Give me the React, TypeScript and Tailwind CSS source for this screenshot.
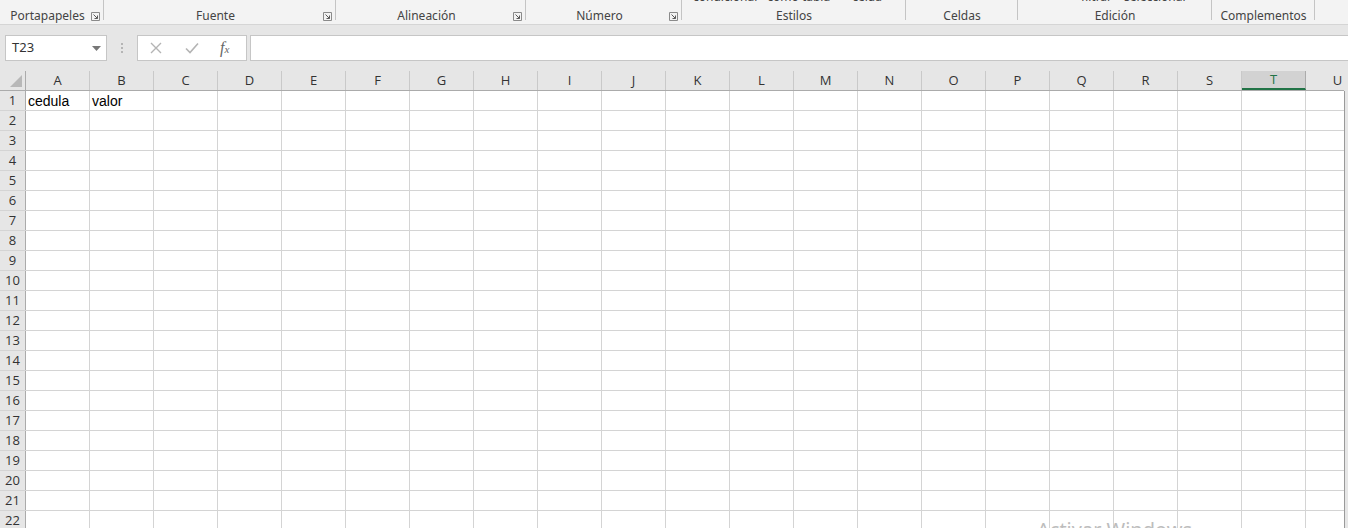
import React from 'react';

const columns = ['A', 'B', 'C', 'D', 'E', 'F', 'G', 'H', 'I', 'J', 'K', 'L', 'M', 'N', 'O', 'P', 'Q', 'R', 'S', 'T', 'U'];
const rows = Array.from({ length: 22 }, (_, i) => i + 1);

const cells: Record<string, string> = { A1: 'cedula', B1: 'valor' };

const groups = [
  { label: 'Portapapeles', width: 'w-[104px]', launcher: true },
  { label: 'Fuente', width: 'w-[232px]', launcher: true },
  { label: 'Alineación', width: 'w-[190px]', launcher: true },
  { label: 'Número', width: 'w-[156px]', launcher: true },
  { label: 'Estilos', width: 'w-[224px]', launcher: false },
  { label: 'Celdas', width: 'w-[112px]', launcher: false },
  { label: 'Edición', width: 'w-[194px]', launcher: false },
  { label: 'Complementos', width: 'w-[103px]', launcher: false },
];

function Launcher() {
  return (
    <svg width="9" height="9" viewBox="0 0 9 9" className="shrink-0">
      <path d="M0.5 0.5h8v8h-8z" fill="none" stroke="#8a8a8a" />
      <path d="M2.5 2.5l4 4M6.5 3.5v3h-3" fill="none" stroke="#5a5a5a" />
    </svg>
  );
}

function Ribbon() {
  return (
    <div className="relative flex h-[25px] border-b border-[#d5d5d5] bg-[#f3f3f3] overflow-hidden text-[12px] text-[#444]">
      {/* button captions cut off at the top of the ribbon */}
      <div className="absolute left-[693px] top-[-11px] flex gap-[8px] leading-[16px]">
        <span>condicional</span>
        <span className="ml-[2px]">como tabla</span>
        <span className="ml-[14px]">celda</span>
      </div>
      <div className="absolute left-[1081px] top-[-11px] flex gap-[12px] leading-[16px]">
        <span>filtrar</span>
        <span>seleccionar</span>
      </div>
      {groups.map((g) => (
        <div key={g.label} className={`${g.width} shrink-0 flex`}>
          <div className="flex-1 flex items-center h-[16px] mt-[8px] pl-[4px] pr-[3px] leading-[16px]">
            <span className="flex-1 text-center">{g.label}</span>
            {g.launcher && <Launcher />}
          </div>
          <div className="w-px h-[20px] bg-[#c4c4c4]" />
        </div>
      ))}
    </div>
  );
}

function FormulaBar() {
  return (
    <div className="flex items-center h-[46px] bg-[#e6e6e6] pl-[5px] text-[#333]">
      <div className="flex items-center w-[102px] h-[26px] bg-white border border-[#c6c6c6] pl-[6px] pr-[5px] text-[13px]">
        <span className="flex-1">T23</span>
        <svg width="9" height="5" viewBox="0 0 9 5">
          <path d="M0 0h9L4.5 5z" fill="#777" />
        </svg>
      </div>
      <div className="w-[30px] flex flex-col items-center gap-[2px]">
        <span className="w-[2px] h-[2px] bg-[#b5b5b5]" />
        <span className="w-[2px] h-[2px] bg-[#b5b5b5]" />
        <span className="w-[2px] h-[2px] bg-[#b5b5b5]" />
      </div>
      <div className="flex items-center w-[110px] h-[26px] bg-white border border-[#c6c6c6]">
        <svg width="12" height="12" viewBox="0 0 12 12" className="ml-[12px]">
          <path d="M1 1l10 10M11 1L1 11" stroke="#b4b4b4" strokeWidth="1.4" />
        </svg>
        <svg width="14" height="12" viewBox="0 0 14 12" className="ml-[23px]">
          <path d="M1 6.5l4 4L13 1.5" fill="none" stroke="#b4b4b4" strokeWidth="1.6" />
        </svg>
        <span className="ml-[21px] italic font-['Liberation_Serif',serif] text-[16px] text-[#666] leading-none">
          f<span className="text-[11px]">x</span>
        </span>
      </div>
      <div className="ml-[3px] flex-1 h-[26px] bg-white border border-[#c6c6c6] border-r-0" />
    </div>
  );
}

function Sheet() {
  return (
    <div className="flex">
      <div className="w-[1344px] shrink-0 overflow-hidden font-['Open_Sans',sans-serif]">
        {/* column headers */}
        <div className="flex h-[20px] bg-[#e6e6e6] border-b border-[#ababab]">
          <div className="relative w-[26px] shrink-0 border-r border-[#ababab]">
            <svg width="12" height="12" viewBox="0 0 12 12" className="absolute right-[3px] bottom-[3px]">
              <path d="M12 0v12H0z" fill="#b8b8b8" />
            </svg>
          </div>
          {columns.map((c) =>
            c === 'T' ? (
              <div
                key={c}
                className="w-[64px] shrink-0 flex items-center justify-center bg-[#d2d2d2] border-r border-[#ababab] border-b-2 border-b-[#217346] text-[13px] text-[#217346]"
              >
                {c}
              </div>
            ) : (
              <div key={c} className="w-[64px] shrink-0 flex items-center justify-center border-r border-[#c9c9c9] text-[13px] text-[#333]">
                {c}
              </div>
            )
          )}
        </div>
        {/* rows */}
        {rows.map((r) => (
          <div key={r} className="flex h-[20px] border-b border-[#d4d4d4] bg-white">
            <div className="w-[26px] shrink-0 flex items-center justify-center bg-[#e6e6e6] border-r border-[#ababab] text-[13px] text-[#333]">
              {r}
            </div>
            {columns.map((c) => (
              <div key={c} className="w-[64px] shrink-0 flex items-center pl-[2px] pt-[1px] border-r border-[#d4d4d4] text-[14px] text-black font-['Liberation_Sans',sans-serif] whitespace-nowrap">
                {cells[`${c}${r}`] ?? ''}
              </div>
            ))}
          </div>
        ))}
      </div>
      <div className="flex-1 border-l border-[#9a9a9a] bg-[#e6e6e6] mt-[20px]" />
    </div>
  );
}

export default function App() {
  return (
    <div className="relative w-[1348px] h-[528px] overflow-hidden bg-[#e6e6e6] font-['Noto_Sans',sans-serif]">
      <Ribbon />
      <FormulaBar />
      <Sheet />
      <div className="absolute left-[1037px] top-[515px] text-[20px] text-[#bdbdbd] font-['Noto_Sans',sans-serif] whitespace-nowrap pointer-events-none">
        Activar Windows
      </div>
    </div>
  );
}
